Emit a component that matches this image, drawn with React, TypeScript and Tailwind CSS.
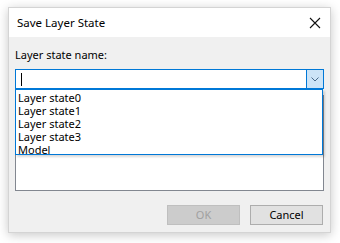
import React from 'react';

const items = ['Layer state0', 'Layer state1', 'Layer state2', 'Layer state3', 'Model'];

export default function App() {
  return (
    <div
      className="w-[340px] h-[243px] bg-white pt-[7px] pl-[8px] text-[11px] text-black"
      style={{ fontFamily: '"Noto Sans", "Liberation Sans", sans-serif' }}
    >
      <div className="w-[323px] h-[226px] flex flex-col bg-[#f0f0f0] border border-[#d4d4d4] shadow-[0_2px_10px_rgba(0,0,0,0.22)]">
        {/* title bar */}
        <div className="h-[29px] bg-white flex items-center justify-between pl-[8px] pr-[9px]">
          <span className="leading-[16px] text-[11.5px]">Save Layer State</span>
          <svg width="12" height="12" viewBox="0 0 12 12" aria-hidden="true">
            <path d="M1 1L11 11M11 1L1 11" stroke="#111" strokeWidth="1.1" fill="none" />
          </svg>
        </div>

        {/* body */}
        <div className="flex-1 flex flex-col px-[6px] pt-[10px]">
          <div className="leading-[16px] h-[16px]">Layer state name:</div>

          <div className="relative mt-[6px]">
            <div className="h-[20px] bg-white border border-[#0078d7] flex">
              <div className="flex-1 flex items-center pl-[5px]">
                <div className="w-px h-[13px] bg-black" />
              </div>
              <div className="w-[17px] bg-[#cce4f7] border-l border-[#0078d7] flex items-center justify-center">
                <svg width="8" height="5" viewBox="0 0 8 5" aria-hidden="true">
                  <path d="M0.5 0.5L4 4L7.5 0.5" stroke="#4a6a8a" strokeWidth="1" fill="none" />
                </svg>
              </div>
            </div>

            {/* open dropdown list */}
            <div className="absolute left-0 top-[20px] w-[308px] h-[66px] bg-white border border-[#0078d7] z-10 pl-[1px] pt-[1px] shadow-[2px_2px_2px_rgba(0,0,0,0.15)]">
              {items.map((item) => (
                <div key={item} className="h-[13px] leading-[13px] pl-[1px]">
                  {item}
                </div>
              ))}
            </div>
          </div>

          {/* list behind */}
          <div className="mt-[6px] h-[96px] bg-white border border-[#828790]" />

          <div className="flex justify-end gap-[10px] mt-[14px] pr-[1px]">
            <div className="w-[73px] h-[20px] bg-[#cccccc] border border-[#bfbfbf] text-[#a0a0a0] flex items-center justify-center">
              OK
            </div>
            <div className="w-[73px] h-[20px] bg-[#e1e1e1] border border-[#adadad] flex items-center justify-center">
              Cancel
            </div>
          </div>
        </div>
      </div>
    </div>
  );
}
